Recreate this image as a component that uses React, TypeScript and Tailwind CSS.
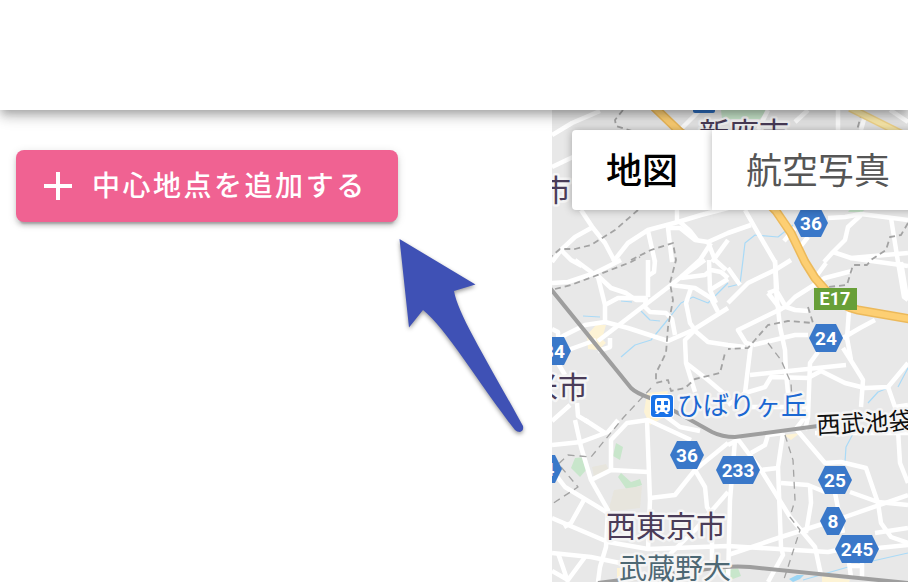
import React from "react";

const MINOR_ROADS = [
  "M552 135L572 123L600 111",
  "M552 167L573 157",
  "M581 210L593 228L605 243L615 262",
  "M552 262L561 250L575 237L593 227",
  "M561 250L571 260L582 266",
  "M613 262L628 243L648 230L678 222L701 215L728 208",
  "M677 205V222",
  "M648 231L655 262",
  "M672 262L668 228H680L695 240L708 242L728 233L751 225",
  "M680 222L690 231L697 240",
  "M708 242L715 260L726 270",
  "M711 243L700 260L681 277",
  "M728 240L712 262",
  "M678 132L690 120L700 110",
  "M745 210L758 233L775 262L777 290",
  "M784 241L795 228M808 237L800 247",
  "M768 110L758 130M838 110V130M866 112L861 130M795 122L808 110M890 110L908 122",
  "M828 218L845 217L861 214L908 220",
  "M861 215L848 227L845 240L833 252L824 262",
  "M833 252L851 258L908 253",
  "M891 218L898 262L904 297L908 300",
  "M850 258L908 266",
];

const ROADS = [
  "M552 283L568 282L595 273L621 260",
  "M575 260L598 277L605 305V323",
  "M596 274L611 288L626 293L636 300H646",
  "M605 305L618 298L646 298",
  "M648 260V297M655 260L654 272L648 276",
  "M646 297L645 307L650 312L666 313L672 319L675 335",
  "M598 341L671 285L681 277L705 260",
  "M552 343L565 335L585 325L605 322L628 328L668 341L693 330L728 308",
  "M671 285L695 288L711 298L718 312",
  "M681 278L705 275L711 270L721 272L728 278M709 260L710 290L716 303",
  "M710 290L728 279",
  "M691 288L686 303L690 323L695 330L685 340L686 363L695 392",
  "M694 330L708 342L728 345L745 347",
  "M686 363L708 380L728 397",
  "M610 338V347L598 351",
  "M552 357L568 350L596 340",
  "M552 329L558 332L559 365L565 375",
  "M577 403L578 416L588 422M552 421L570 405",
  "M728 303L748 283L775 270L791 260",
  "M775 260L776 290L780 327L785 350L786 373L788 393",
  "M728 268L740 285M826 263L815 278",
  "M852 271L825 278L795 297L785 307L738 330L746 343L753 345",
  "M768 293L776 290L786 307L795 310L808 311M768 293L782 311",
  "M753 345L795 335H808",
  "M751 343L745 393L728 405",
  "M750 375L846 365",
  "M745 393L765 387L771 377L808 378L821 371L845 383L865 388L888 387L908 363",
  "M818 352L810 363L808 417L805 430",
  "M843 348L855 367L863 380L861 407",
  "M849 310L847 338L851 360M843 338L860 328L875 320",
  "M901 262L907 298M888 387L895 407L908 405",
  "M660 412L680 427L700 431M745 407H808",
  "M575 420L581 447L591 480L608 510L606 547L600 567L598 582",
  "M552 445L581 442L608 432L618 420M585 420L605 433",
  "M611 470L611 440L627 423L648 420L691 440",
  "M647 420L650 500L648 550",
  "M591 480L611 470L648 472",
  "M728 443L695 470L675 495L650 498",
  "M695 470L705 487L707 507L712 515V560",
  "M552 470L565 487L608 513",
  "M585 498L571 523L564 527",
  "M552 518L608 542L648 549L728 546L828 552L838 550",
  "M552 553L591 557L620 563",
  "M558 553L568 582M585 557L568 580L552 571",
  "M728 492L695 530L671 553L660 570",
  "M735 440L730 500L728 582",
  "M737 438L761 470L790 517L815 547L821 575",
  "M783 433L778 467L781 547L783 555L768 582",
  "M751 453L765 445L768 435L783 433M728 445L738 440",
  "M761 470L778 468M815 433H908",
  "M797 430L825 463L841 462L866 468L878 503L881 523L891 537L908 543",
  "M795 430L805 417",
  "M781 483L808 485L825 492M810 486L811 503L806 533",
  "M850 492L878 502L908 505",
  "M728 555L781 537L845 517L908 495",
  "M835 493L843 533M878 548L908 545M875 533L908 528",
  "M898 430L900 463L908 483M849 563L851 577M862 563V580M850 566H862",
];

const FOOTPATHS = [
  "M623 110L615 120L616 126L635 132",
  "M638 210L615 230L591 245L575 249L560 249L552 256",
  "M631 260L651 250L673 243L676 260L670 283L673 300L668 327L666 353L656 373V383L668 380L671 391L685 388L695 379L720 373L725 353",
  "M555 289L571 285L595 276L631 262L640 257",
  "M908 223L901 235L890 237L886 250L871 260L867 265H853L847 285L828 287",
  "M808 307L813 323L788 321L768 325L755 340L748 348L728 349",
  "M862 112L857 130",
];

const BOUNDARIES = [
  "M651 388L623 418L591 457L568 455L552 470",
  "M561 467L578 487L552 504",
  "M768 343L781 360L791 383L793 420",
  "M785 435L793 460L795 500L790 517L800 530L788 567L783 582",
];

const STREAMS = [
  "M621 357L635 345L651 340L665 323L681 303L693 297L708 303L728 283",
  "M641 311L650 320L660 321M583 316L600 317M621 301L632 302",
  "M728 287L740 284L743 260L745 243L755 235L778 237L793 225",
  "M908 368L898 387M868 403L878 392L888 388",
  "M855 430L846 447L845 462",
  "M803 580L855 565L908 553",
];

const SHIELDS = [
  { label: "36", x: 811, y: 223, w: 34 },
  { label: "24", x: 826, y: 338, w: 34 },
  { label: "34", x: 554, y: 351, w: 34 },
  { label: "36", x: 687, y: 455, w: 34 },
  { label: "4", x: 549, y: 469, w: 26 },
  { label: "233", x: 738, y: 470, w: 44 },
  { label: "25", x: 835, y: 480, w: 34 },
  { label: "8", x: 833, y: 521, w: 26 },
  { label: "245", x: 857, y: 549, w: 44 },
];

function Shield({ label, x, y, w }: { label: string; x: number; y: number; w: number }) {
  const h = w / 2;
  return (
    <g>
      <path
        d={`M${x - h} ${y}L${x - h + 7} ${y - 14}H${x + h - 7}L${x + h} ${y}L${x + h - 7} ${y + 14}H${x - h + 7}Z`}
        fill="#3a78c9"
      />
      <text
        x={x}
        y={y + 7}
        textAnchor="middle"
        fill="#fff"
        className="font-[family-name:'Liberation_Sans_Narrow','Roboto',sans-serif] text-[19px] font-bold"
      >
        {label}
      </text>
    </g>
  );
}

function Lines({ paths, ...rest }: { paths: string[] } & React.SVGProps<SVGGElement>) {
  return (
    <g fill="none" strokeLinejoin="round" {...rest}>
      {paths.map((d) => (
        <path key={d} d={d} />
      ))}
    </g>
  );
}

function MapCanvas() {
  return (
    <svg
      viewBox="552 110 356 472"
      preserveAspectRatio="xMinYMin slice"
      className="absolute inset-0 h-full w-full"
      role="img"
      aria-label="地図"
    >
      <rect x="552" y="110" width="356" height="472" fill="#e8e8e8" />
      <g fill="#c8e6cb">
        <path d="M721 110H767L760 119H722Z" />
        <path d="M616 443L623 447L620 460L613 456Z" />
        <path d="M575 458L585 457L587 469L580 477L571 468Z" />
        <path d="M621 473L631 482L640 479L642 485L627 490L618 477Z" />
        <path d="M848 212L852 207L870 205L862 212Z" />
        <path d="M722 571L738 568L741 576L730 580Z" />
      </g>
      <g fill="#e7e5dd">
        <path d="M592 467L606 464L610 472L594 477Z" />
        <path d="M614 490L642 486L640 508L608 512Z" />
      </g>
      <g fill="#fdf3d5">
        <path d="M596 325L606 325L602 339L606 343L598 350L588 349L587 335Z" />
        <path d="M647 393L668 391L663 418L650 425L644 412Z" />
        <path d="M784 435L800 433L791 440Z" />
        <path d="M822 576L850 580L849 582H822Z" />
        <path d="M617 568L624 568V578H617Z" />
      </g>
      <Lines paths={STREAMS} stroke="#a9daf7" strokeWidth="1.2" />
      <path d="M789 579L797 575L804 575L800 579L793 582Z" fill="#9bd6f5" />
      <Lines paths={MINOR_ROADS} stroke="#fff" strokeWidth="4.500" />
      <Lines paths={ROADS} stroke="#fff" strokeWidth="4.500" />
      <Lines paths={FOOTPATHS} stroke="#a3a3a3" strokeWidth="1.8" strokeDasharray="6 4" />
      <Lines paths={BOUNDARIES} stroke="#a3a3a3" strokeWidth="1.3" strokeDasharray="7 5" />
      <g fill="none" strokeLinejoin="round">
        <path d="M850 108L872 119L908 137" stroke="#f2d68c" strokeWidth="8" />
        <path d="M850 108L872 119L908 137" stroke="#fbeaab" strokeWidth="5" />
        <path
          d="M654 107L680 132L740 175L776 211L791 233L805 262L815 278L828 293Q840 306 858 310L910 319"
          stroke="#ecb95a"
          strokeWidth="9"
        />
        <path
          d="M654 107L680 132L740 175L776 211L791 233L805 262L815 278L828 293Q840 306 858 310L910 319"
          stroke="#fdcf73"
          strokeWidth="6"
        />
        <path d="M550 288L631 388Q636 393 650 398L678 413L712 432Q722 437 735 437L818 426" stroke="#9e9e9e" strokeWidth="4" />
        <path d="M598 583L700 570Q730 565 750 567L908 583" stroke="#9e9e9e" strokeWidth="4" />
      </g>
      <rect x="693" y="104" width="22" height="9" rx="2" fill="#2e6cbc" />
      {SHIELDS.map((s) => (
        <Shield key={s.label + s.x} {...s} />
      ))}
      <rect x="814" y="288" width="43" height="22" fill="#689f38" />
      <text
        x="835"
        y="305"
        textAnchor="middle"
        fill="#fff"
        className="font-[family-name:'Roboto',sans-serif] text-[18px] font-bold"
      >
        E17
      </text>
      <g
        stroke="#f5f5f5"
        strokeWidth="5"
        strokeLinejoin="round"
        paintOrder="stroke"
        className="font-[family-name:'Noto_Sans_CJK_JP',sans-serif]"
      >
        <g fill="#4a3c58" className="text-[30px]">
          <text x="699" y="144">新座市</text>
          <text x="571" y="201" textAnchor="end">市</text>
          <text x="588" y="398" textAnchor="end">米市</text>
          <text x="606" y="537">西東京市</text>
        </g>
        <text x="619" y="579" fill="#4d6874" className="text-[28px]">武蔵野大</text>
        <text x="677" y="415" fill="#1a67d2" className="text-[26px]">ひばりヶ丘</text>
        <text x="817" y="434" fill="#111" transform="rotate(-3 817 434)" className="text-[24px]">
          西武池袋
        </text>
      </g>
      <g>
        <rect x="650" y="394" width="24" height="24" rx="4" fill="#fff" />
        <rect x="651" y="395" width="22" height="22" rx="3" fill="#1a73e8" />
        <path
          d="M658 398H666Q670 398 670 402V409Q670 412 667 412L669 414H666L664 412H660L658 414H655L657 412Q655 412 655 409V402Q655 398 658 398Z"
          fill="#fff"
        />
        <path d="M657 401H661V405H657ZM664 401H668V405H664Z" fill="#1a73e8" />
        <circle cx="659" cy="409" r="1.4" fill="#1a73e8" />
        <circle cx="666" cy="409" r="1.4" fill="#1a73e8" />
      </g>
    </svg>
  );
}

export default function App() {
  return (
    <div className="flex min-h-screen flex-col overflow-hidden bg-white font-[family-name:'Noto_Sans_CJK_JP',sans-serif]">
      <header className="relative z-10 h-[110px] shrink-0 bg-white shadow-[0_4px_8px_-2px_rgba(0,0,0,0.2),0_8px_10px_rgba(0,0,0,0.14),0_2px_20px_rgba(0,0,0,0.12)]" />
      <main className="flex flex-1">
        <section className="relative w-[552px] shrink-0 px-4 pt-10">
          <button
            type="button"
            className="flex h-[72px] items-center gap-4 rounded-lg bg-[#f06292] pr-[31px] pl-6 text-[28px] font-medium tracking-[0.09em] whitespace-nowrap text-white shadow-[0_6px_2px_-4px_rgba(0,0,0,0.2),0_4px_4px_rgba(0,0,0,0.14),0_2px_10px_rgba(0,0,0,0.12)]"
          >
            <svg viewBox="0 0 36 36" className="size-9" aria-hidden="true">
              <path d="M4 18H32M18 4V32" stroke="currentColor" strokeWidth="4" />
            </svg>
            <span className="pb-1">中心地点を追加する</span>
          </button>
          <svg
            viewBox="390 230 144 214"
            className="absolute top-[120px] left-[390px] w-36 drop-shadow-[0_2px_2px_rgba(0,0,0,0.4)]"
            aria-hidden="true"
          >
            <path
              d="M399.500 239L475.500 284.500L454 291C458 314 484 355 523 426Q524 431 520 432Q517 432 515 430C480 385 445 327 423 310L409 327.500Z"
              fill="#3f51b5"
            />
          </svg>
        </section>
        <section className="relative min-w-0 flex-1 overflow-hidden">
          <MapCanvas />
          <div className="absolute top-5 left-5 flex h-20 text-[36px] whitespace-nowrap">
            <button
              type="button"
              className="rounded-l bg-white px-[34px] pb-1 font-medium text-black shadow-[0_0_8px_rgba(0,0,0,0.3)]"
            >
              地図
            </button>
            <button
              type="button"
              className="rounded-r bg-white px-[34px] pb-1 text-[#565656] shadow-[0_0_8px_rgba(0,0,0,0.3)]"
            >
              航空写真
            </button>
          </div>
        </section>
      </main>
    </div>
  );
}
